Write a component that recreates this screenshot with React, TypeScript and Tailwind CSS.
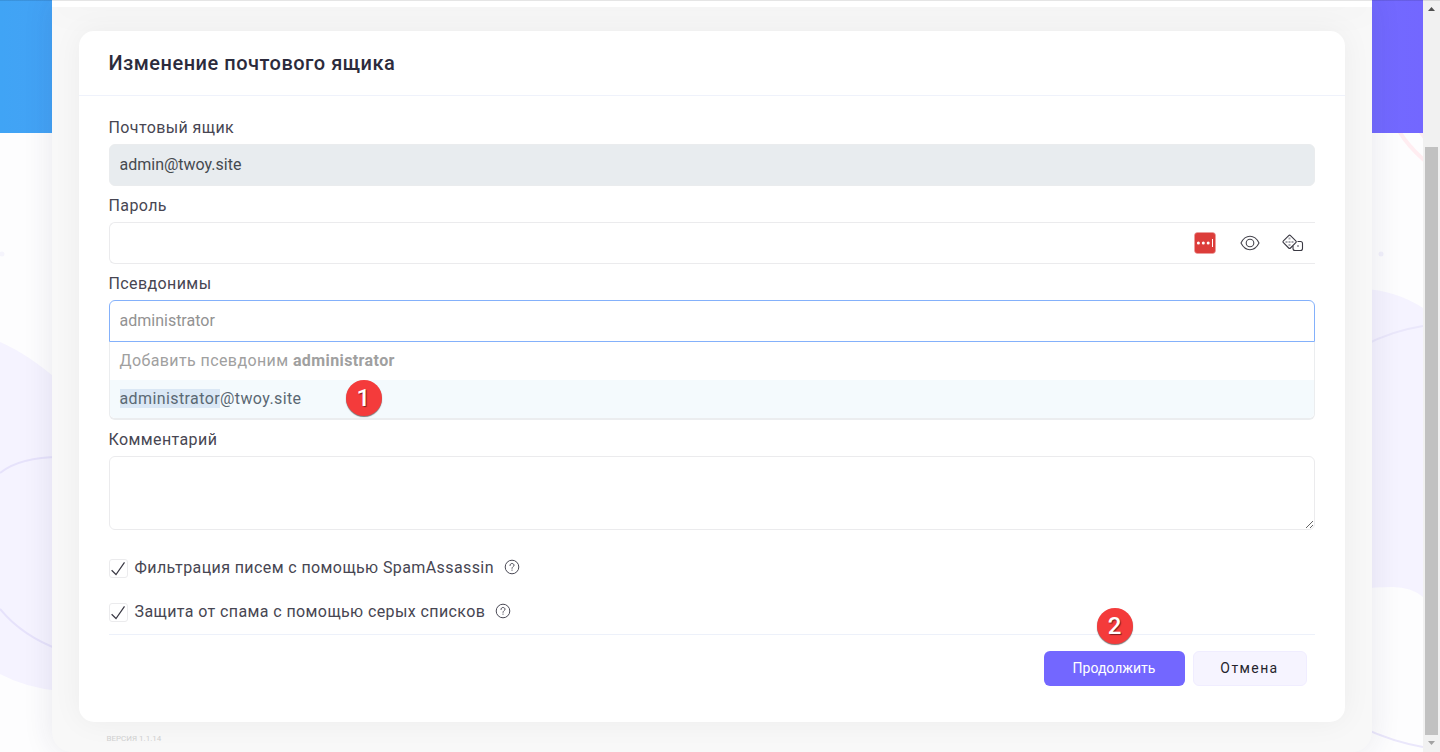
import type { ReactNode } from "react";
import { useState } from "react";

interface FieldProps {
  id: string;
  label: string;
  children: ReactNode;
}

function Field({ id, label, children }: FieldProps) {
  return (
    <div>
      <label htmlFor={id} className="mb-[3px] block leading-[26px] tracking-wide text-[#474652]">
        {label}
      </label>
      {children}
    </div>
  );
}

function HelpIcon() {
  return (
    <svg width="16" height="16" viewBox="0 0 16 16" fill="none" stroke="#4a4955" strokeWidth="1">
      <circle cx="8" cy="8" r="6.8" />
      <path d="M6 6.5C6 5.2 6.9 4.5 8 4.5s2 .7 2 1.8C10 7.5 8 7.7 8 9.3" strokeLinecap="round" />
      <path d="M8 10.6v1.1" />
    </svg>
  );
}

function PasswordManagerIcon() {
  return (
    <svg width="22" height="22" viewBox="0 0 22 22">
      <rect x="0.5" y="0.5" width="21" height="21" rx="3" fill="#dc3d3a" stroke="#eba09e" strokeWidth="0.6" />
      <circle cx="4.4" cy="11" r="1.5" fill="#fff" />
      <circle cx="9.3" cy="11" r="1.5" fill="#fff" />
      <circle cx="14.2" cy="11" r="1.5" fill="#fff" />
      <path d="M18.5 7v8" stroke="#fff" strokeWidth="1" />
    </svg>
  );
}

function EyeIcon() {
  return (
    <svg width="20" height="16" viewBox="0 0 20 16" fill="none" stroke="#45444d" strokeWidth="1.1">
      <path d="M1 8C3.2 3.6 6.4 1.3 10 1.3S16.8 3.6 19 8c-2.2 4.4-5.400 6.700-9 6.700S3.200 12.400 1 8z" />
      <circle cx="10" cy="8" r="3.8" />
    </svg>
  );
}

function DiceIcon() {
  return (
    <svg width="22" height="18" viewBox="0 0 22 18" fill="none" stroke="#3a3943" strokeWidth="1.1">
      <path d="M6.7 1.600L1.400 6.900q-.9.900 0 1.800l5.300 5.300q.9.900 1.800 0l5.300-5.300q.9-.9 0-1.800L8.500 1.600q-.9-.9-1.800 0z" />
      <path d="M15.500 7.500h3q2 0 2 2v5q0 2-2 2h-5.500q-2 0-2-2v-2.500" />
      <g fill="#a9a9b0" stroke="none">
        <rect x="6.500" y="3.500" width="2" height="2" />
        <rect x="3.500" y="7" width="2" height="2" />
        <rect x="6.500" y="7" width="2" height="2" />
        <rect x="9.500" y="7" width="2" height="2" />
        <rect x="6.500" y="10" width="2" height="2" />
        <rect x="15" y="11" width="2" height="2" />
      </g>
    </svg>
  );
}

function StepMark({ value }: { value: number }) {
  return (
    <span className="flex size-9 items-center justify-center rounded-full bg-[#f43b3b] text-2xl font-medium text-white shadow-[0_1px_1px_#777] [text-shadow:1px_1px_1px_#7a1f1f]">
      {value}
    </span>
  );
}

function CheckRow({ id, label }: { id: string; label: string }) {
  const [checked, setChecked] = useState(true);

  return (
    <div className="flex h-6 items-center">
      <span className="relative mt-0.5 size-[19px] shrink-0">
        <input
          id={id}
          type="checkbox"
          checked={checked}
          onChange={(e) => setChecked(e.target.checked)}
          className="block size-[19px] appearance-none rounded-[3px] border border-[#ebebed] bg-white"
        />
        {checked ? (
          <svg
            className="pointer-events-none absolute inset-0"
            width="19"
            height="19"
            viewBox="0 0 19 19"
            fill="none"
            stroke="#3b3a45"
            strokeWidth="1.2"
          >
            <path d="M2.600 11.200l4.400 4.300L15.500 3.300" />
          </svg>
        ) : null}
      </span>
      <label htmlFor={id} className="ml-[7px] pt-0.5 tracking-wide text-[#474652]">
        {label}
      </label>
      <button type="button" aria-label="Справка" className="ml-2.5">
        <HelpIcon />
      </button>
    </div>
  );
}

function Backdrop() {
  return (
    <div className="absolute inset-0 -z-10 overflow-hidden bg-[#fdfdfe]">
      <svg className="absolute top-0 left-0" width="60" height="752" viewBox="0 0 60 752" fill="none">
        <path d="M0 342Q28 354 60 382V691Q26 688 0 674z" fill="#f5f3ff" />
        <path d="M0 473Q20 457 60 457M0 609Q22 636 60 650" stroke="#e6e2fb" strokeWidth="2" />
        <circle cx="2" cy="254" r="2.5" fill="#f5f4fc" />
      </svg>
      <svg className="absolute top-0 right-0" width="60" height="752" viewBox="0 0 60 752" fill="none">
        <path d="M0 289Q32 290 60 308V597Q48 587 30 587Q10 587 0 589z" fill="#f5f3ff" />
        <path d="M0 346Q28 331 60 326M0 728Q30 742 60 747" stroke="#eae7fb" strokeWidth="2" />
        <path d="M36 131Q45 146 61 160M57 131l5 7" stroke="#ffedf1" strokeWidth="4" />
        <circle cx="18" cy="254" r="2.5" fill="#f1f0fb" />
      </svg>
      <div className="relative h-[133px] bg-linear-to-r from-[#40a4f5] to-[#7367ff]" />
    </div>
  );
}

function Scrollbar() {
  return (
    <div aria-hidden="true" className="flex w-[17px] shrink-0 flex-col items-center bg-[#f1f1f1]">
      <svg width="17" height="17" viewBox="0 0 17 17" fill="#505050">
        <path d="M5 11h7L8.500 7z" />
      </svg>
      <div className="mt-[130px] w-[13px] flex-1 bg-[#c1c1c1]" />
      <svg width="17" height="17" viewBox="0 0 17 17" fill="#a3a3a3">
        <path d="M5 6h7L8.500 10z" />
      </svg>
    </div>
  );
}

export default function App() {
  const [password, setPassword] = useState("");
  const [visible, setVisible] = useState(false);
  const [alias, setAlias] = useState("administrator");
  const [comment, setComment] = useState("");

  return (
    <div className="relative flex min-h-screen font-[Roboto,'Liberation_Sans',sans-serif] text-base">
      <div className="relative isolate min-w-0 flex-1">
        <Backdrop />
        <div className="mx-auto flex min-h-screen max-w-[1320px] flex-col overflow-hidden rounded-b-[20px] bg-[#f8f8f8] shadow-[0_0_30px_rgba(40,40,80,0.1)]">
          <div className="h-[7px] bg-white shadow-[0_0_35px_rgba(0,0,0,0.08)]" />
          <main className="mx-[27px] mt-6 rounded-[15px] bg-white shadow-[0_0_30px_rgba(0,0,0,0.05)]">
            <header className="border-b border-[#eff2fb] px-[30px] py-[18px]">
              <h1 className="text-xl leading-7 font-medium tracking-wide text-[#2c2b3c]">
                Изменение почтового ящика
              </h1>
            </header>

            <form className="px-[30px] pt-[19px] pb-9" onSubmit={(e) => e.preventDefault()}>
              <div className="space-y-[7px]">
                <Field id="mailbox" label="Почтовый ящик">
                  <input
                    id="mailbox"
                    type="text"
                    readOnly
                    value="admin@twoy.site"
                    className="block h-[42px] w-full rounded-md border border-[#eaecee] bg-[#e8ecef] px-2.5 pb-0.5 text-[#454a4f] outline-none"
                  />
                </Field>

                <Field id="password" label="Пароль">
                  <div className="flex h-[42px] items-center rounded-l-md border-y border-l border-[#ebebed] pr-[11px]">
                    <input
                      id="password"
                      type={visible ? "text" : "password"}
                      value={password}
                      onChange={(e) => setPassword(e.target.value)}
                      className="h-full min-w-0 flex-1 bg-transparent px-2.5 outline-none"
                    />
                    <button type="button" aria-label="Менеджер паролей">
                      <PasswordManagerIcon />
                    </button>
                    <button type="button" aria-label="Показать пароль" className="ml-6" onClick={() => setVisible(!visible)}>
                      <EyeIcon />
                    </button>
                    <button type="button" aria-label="Сгенерировать пароль" className="ml-[22px]">
                      <DiceIcon />
                    </button>
                  </div>
                </Field>

                <Field id="aliases" label="Псевдонимы">
                  <input
                    id="aliases"
                    type="text"
                    role="combobox"
                    aria-expanded="true"
                    aria-controls="alias-options"
                    value={alias}
                    onChange={(e) => setAlias(e.target.value)}
                    className="block h-[42px] w-full rounded-t-md border border-[#84b1fb] px-2.5 pb-0.5 text-[#929292] outline-none"
                  />
                  <ul
                    id="alias-options"
                    role="listbox"
                    className="rounded-b-md border-x border-b-2 border-[#ebedef] leading-[38px] tracking-wide"
                  >
                    <li role="option" aria-selected="false" className="h-[38px] px-2.5 text-[#a0a0a0]">
                      Добавить псевдоним <strong className="font-bold">{alias}</strong>
                    </li>
                    <li
                      role="option"
                      aria-selected="true"
                      className="relative h-[38px] rounded-b-[5px] bg-[#f4fafd] px-2.5 text-[#5a6873]"
                    >
                      <span className="bg-[#dbe8f5]">{alias}</span>@twoy.site
                      <div className="absolute top-0 left-[236px]">
                        <StepMark value={1} />
                      </div>
                    </li>
                  </ul>
                </Field>

                <Field id="comment" label="Комментарий">
                  <textarea
                    id="comment"
                    value={comment}
                    onChange={(e) => setComment(e.target.value)}
                    className="block h-[74px] w-full resize rounded-md border border-[#ebebed] px-2.5 py-2 outline-none"
                  />
                </Field>
              </div>

              <div className="mt-[25px] space-y-5 border-b border-[#edf1fa] pb-[11px]">
                <CheckRow id="spamassassin" label="Фильтрация писем с помощью SpamAssassin" />
                <CheckRow id="greylist" label="Защита от спама с помощью серых списков" />
              </div>

              <div className="mt-4 flex justify-end gap-2 pr-2 text-sm">
                <div className="relative">
                  <button
                    type="submit"
                    className="h-[35px] w-[141px] rounded-md bg-[#7367ff] pb-0.5 text-white"
                  >
                    Продолжить
                  </button>
                  <div className="pointer-events-none absolute bottom-[42px] left-[53px]">
                    <StepMark value={2} />
                  </div>
                </div>
                <button
                  type="button"
                  className="h-[35px] w-[114px] rounded-md border border-[#f0edff] bg-[#f6f4ff] pb-0.5 tracking-widest text-[#25242d]"
                >
                  Отмена
                </button>
              </div>
            </form>
          </main>
          <footer className="px-[55px] pt-[11px] pb-[7px] text-[8px] leading-3 text-[#cfcfcf] uppercase">Версия 1.1.14</footer>
        </div>
      </div>
      <Scrollbar />
      <div className="pointer-events-none absolute inset-x-0 top-0 h-px bg-black/10" />
    </div>
  );
}
